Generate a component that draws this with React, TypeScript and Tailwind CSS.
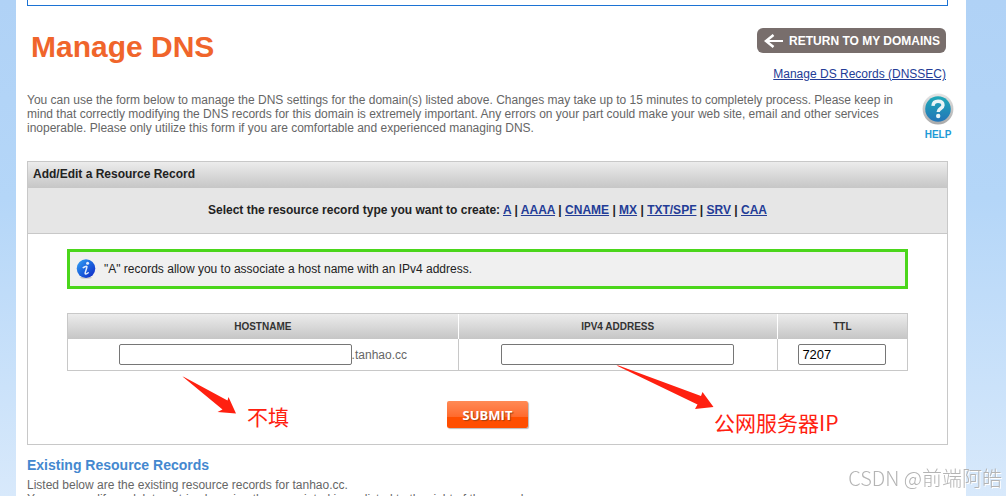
import React from 'react';

const recordTypes = ['A', 'AAAA', 'CNAME', 'MX', 'TXT/SPF', 'SRV', 'CAA'];

const linkClass = 'text-[#233c96] underline';
const inputClass = 'h-[21px] rounded-[2px] border border-[#767676] bg-white px-[3px] text-[13px] text-black';
const thClass = 'h-[25px] border-l border-white p-0 text-[10px] leading-3 font-bold text-[#333333] first:border-[#c8c8c8]';
const tdClass = 'h-[31px] border-l border-[#c8c8c8] p-0 text-center';

const HelpIcon = () => (
  <svg viewBox="0 0 32 32" className="h-8 w-8" aria-hidden="true">
    <defs>
      <linearGradient id="helpRing" x1="0" y1="0" x2="0" y2="1">
        <stop offset="0" stopColor="#e6e6e6" />
        <stop offset="1" stopColor="#a9a9a9" />
      </linearGradient>
      <linearGradient id="helpFill" x1="0" y1="0" x2="0" y2="1">
        <stop offset="0" stopColor="#1fa9b8" />
        <stop offset="1" stopColor="#2375b8" />
      </linearGradient>
    </defs>
    <circle cx="16" cy="16" r="15.4" fill="url(#helpRing)" />
    <circle cx="16" cy="16" r="12.8" fill="url(#helpFill)" />
    <path d="M11 12.8c.2-3.200 2.100-4.600 5-4.600 3 0 5 1.500 5 4 0 3.400-4.800 3.200-4.800 6.800" fill="none" stroke="#e9f4f6" strokeWidth="3.400" />
    <circle cx="16.200" cy="23" r="2.200" fill="#e9f4f6" />
  </svg>
);

const InfoIcon = () => (
  <svg viewBox="0 0 20 20" className="h-5 w-5 shrink-0" aria-hidden="true">
    <defs>
      <linearGradient id="infoFill" x1="0" y1="0" x2="1" y2="1">
        <stop offset="0" stopColor="#35a4f5" />
        <stop offset="0.5" stopColor="#1a62dd" />
        <stop offset="1" stopColor="#1226c4" />
      </linearGradient>
    </defs>
    <ellipse cx="10" cy="18.6" rx="6" ry="1.2" fill="#c9c9c9" />
    <circle cx="10" cy="9.6" r="9.300" fill="url(#infoFill)" />
    <circle cx="11.600" cy="4.200" r="1.500" fill="#e4eefc" />
    <path d="M7.200 8.600c1.700-1.200 3.500-1.700 3.700-.8.300 1.200-2.200 5.800-1.700 7 .3.700 1.700 0 3-1.100" fill="none" stroke="#e4eefc" strokeWidth="1.500" strokeLinecap="round" />
  </svg>
);

const App: React.FC = () => {
  return (
    <div className="h-screen overflow-hidden bg-linear-to-b from-[#b0d2f6] via-[#b4d6f8] via-40% to-[#d8e9fb] font-['Liberation_Sans',Arial,sans-serif] text-xs leading-[14px] text-[#666666]">
      <main className="mr-10 ml-4 min-h-screen bg-white pr-[18px] pl-[11px]">
        <div className="h-1.5 border-x border-b border-[#1c73d4]" />

        <header className="flex items-start justify-between pt-[22px]">
          <h1 className="pl-1 text-[30px] leading-[38px] font-bold text-[#f0652b]">Manage DNS</h1>
          <div className="flex flex-col items-end gap-3.5 pr-0.5">
            <button
              type="button"
              className="flex h-[25px] items-center gap-1.5 rounded-md bg-[#786e6c] pr-1.5 pl-[7px] text-xs font-bold text-white"
            >
              <svg viewBox="0 0 19 14" className="h-3.5 w-[19px]" aria-hidden="true">
                <path d="M9.500 1 L2 7 L9.500 13" fill="none" stroke="#fff" strokeWidth="2.600" />
                <path d="M2 7H19" stroke="#fff" strokeWidth="2" />
              </svg>
              RETURN TO MY DOMAINS
            </button>
            <a href="#dnssec" className={linkClass}>Manage DS Records (DNSSEC)</a>
          </div>
        </header>

        {/* Intro */}
        <div className="flex items-start justify-between pt-3">
          <p className="max-w-[880px] flex-1">
            You can use the form below to manage the DNS settings for the domain(s) listed above. Changes may take up to 15
            minutes to completely process. Please keep in mind that correctly modifying the DNS records for this domain is
            extremely important. Any errors on your part could make your web site, email and other services inoperable.
            Please only utilize this form if you are comfortable and experienced managing DNS.
          </p>
          <a href="#help" className="-mr-1.5 flex flex-col items-center gap-1 text-[10px] leading-3 font-bold text-[#1e9ad6]">
            <HelpIcon />
            HELP
          </a>
        </div>

        {/* Add/Edit panel */}
        <section className="relative mt-5 border border-[#c8c8c8] text-[#222222]">
          <h2 className="bg-linear-to-b from-[#ececec] to-[#c6c6c6] px-[5px] pt-[5px] pb-[7px] font-bold">
            Add/Edit a Resource Record
          </h2>
          <div className="border-b border-[#c8c8c8] bg-[#e6e6e6] pt-[15px] pb-4 text-center font-bold">
            Select the resource record type you want to create:{' '}
            {recordTypes.map((type, i) => (
              <React.Fragment key={type}>
                {i > 0 && ' | '}
                <a href={`#${type}`} className={linkClass}>{type}</a>
              </React.Fragment>
            ))}
          </div>

          <form className="px-[39px] pt-[15px] pb-4" onSubmit={(e) => e.preventDefault()}>
            <div className="flex h-10 items-center gap-2 border-3 border-[#4bd61b] bg-[#f0f0f0] px-1.5">
              <InfoIcon />
              <span>"A" records allow you to associate a host name with an IPv4 address.</span>
            </div>

            <table className="mt-6 w-full table-fixed border-separate border-spacing-0 border-y border-r border-[#c8c8c8]">
              <colgroup>
                <col className="w-[46.5%]" />
                <col className="w-[38%]" />
                <col />
              </colgroup>
              <thead className="bg-linear-to-b from-[#ececec] to-[#c6c6c6]">
                <tr>
                  <th className={thClass}><label htmlFor="hostname">HOSTNAME</label></th>
                  <th className={thClass}><label htmlFor="ipv4">IPV4 ADDRESS</label></th>
                  <th className={thClass}><label htmlFor="ttl">TTL</label></th>
                </tr>
              </thead>
              <tbody>
                <tr>
                  <td className={tdClass}>
                    <div className="flex items-center justify-center text-[#666666]">
                      <input id="hostname" type="text" className={`${inputClass} w-[233px]`} />
                      .tanhao.cc
                    </div>
                  </td>
                  <td className={tdClass}>
                    <div className="flex justify-center">
                      <input id="ipv4" type="text" className={`${inputClass} w-[233px]`} />
                    </div>
                  </td>
                  <td className={tdClass}>
                    <div className="flex justify-center">
                      <input id="ttl" type="text" defaultValue="7207" className={`${inputClass} w-[88px]`} />
                    </div>
                  </td>
                </tr>
              </tbody>
            </table>

            <div className="mt-[30px] flex justify-center">
              <button
                type="submit"
                className="h-[27px] w-[81px] rounded-[2px] bg-linear-to-b from-[#ff8a55] via-[#ff6a2c] via-58% to-[#ff4e00] to-60% font-['Open_Sans',sans-serif] text-[13px] font-bold text-white shadow-[1px_1px_1px_#bbbbbb] text-shadow-[1px_1px_1px_#a04010]"
              >
                SUBMIT
              </button>
            </div>
          </form>

          {/* Notes drawn over the form */}
          <svg viewBox="0 0 56 40" className="pointer-events-none absolute top-[213px] left-[153px] h-10 w-14" aria-hidden="true">
            <path d="M1.500 1.500 L3 2 L46.500 25.500 L47.500 22 L55 38.500 L36.500 37 L41.500 34.500 Z" fill="#ff2010" />
          </svg>
          <span className="absolute top-60 left-[219px] font-['Noto_Sans_CJK_SC',sans-serif] text-[21px] leading-7 text-[#ff2010]">
            不填
          </span>
          <svg viewBox="0 0 100 46" className="pointer-events-none absolute top-[202px] left-[587px] h-[46px] w-[100px]" aria-hidden="true">
            <path d="M1.500 1.500 L3.500 1.500 L86 32 L87.500 28 L98.500 43 L80 45 L82.500 40.500 Z" fill="#ff2010" />
          </svg>
          <span className="absolute top-[246px] left-[686px] font-['Noto_Sans_CJK_SC',sans-serif] text-[21px] leading-7 text-[#ff2010]">
            公网服务器IP
          </span>
        </section>

        <section className="pt-3">
          <h2 className="mb-[5px] text-sm leading-4 font-bold text-[#4488cf]">Existing Resource Records</h2>
          <p>Listed below are the existing resource records for tanhao.cc.</p>
          <p>You may modify or delete entries by using the associated icons listed to the right of the record.</p>
        </section>
      </main>

      <div className="fixed right-1 bottom-1 font-['Noto_Sans_CJK_SC',sans-serif] text-[20px] leading-7 font-light text-[#b4b4b4] text-shadow-[1px_1px_0_#ffffff]">
        CSDN @前端阿皓
      </div>
    </div>
  );
};

export default App;
